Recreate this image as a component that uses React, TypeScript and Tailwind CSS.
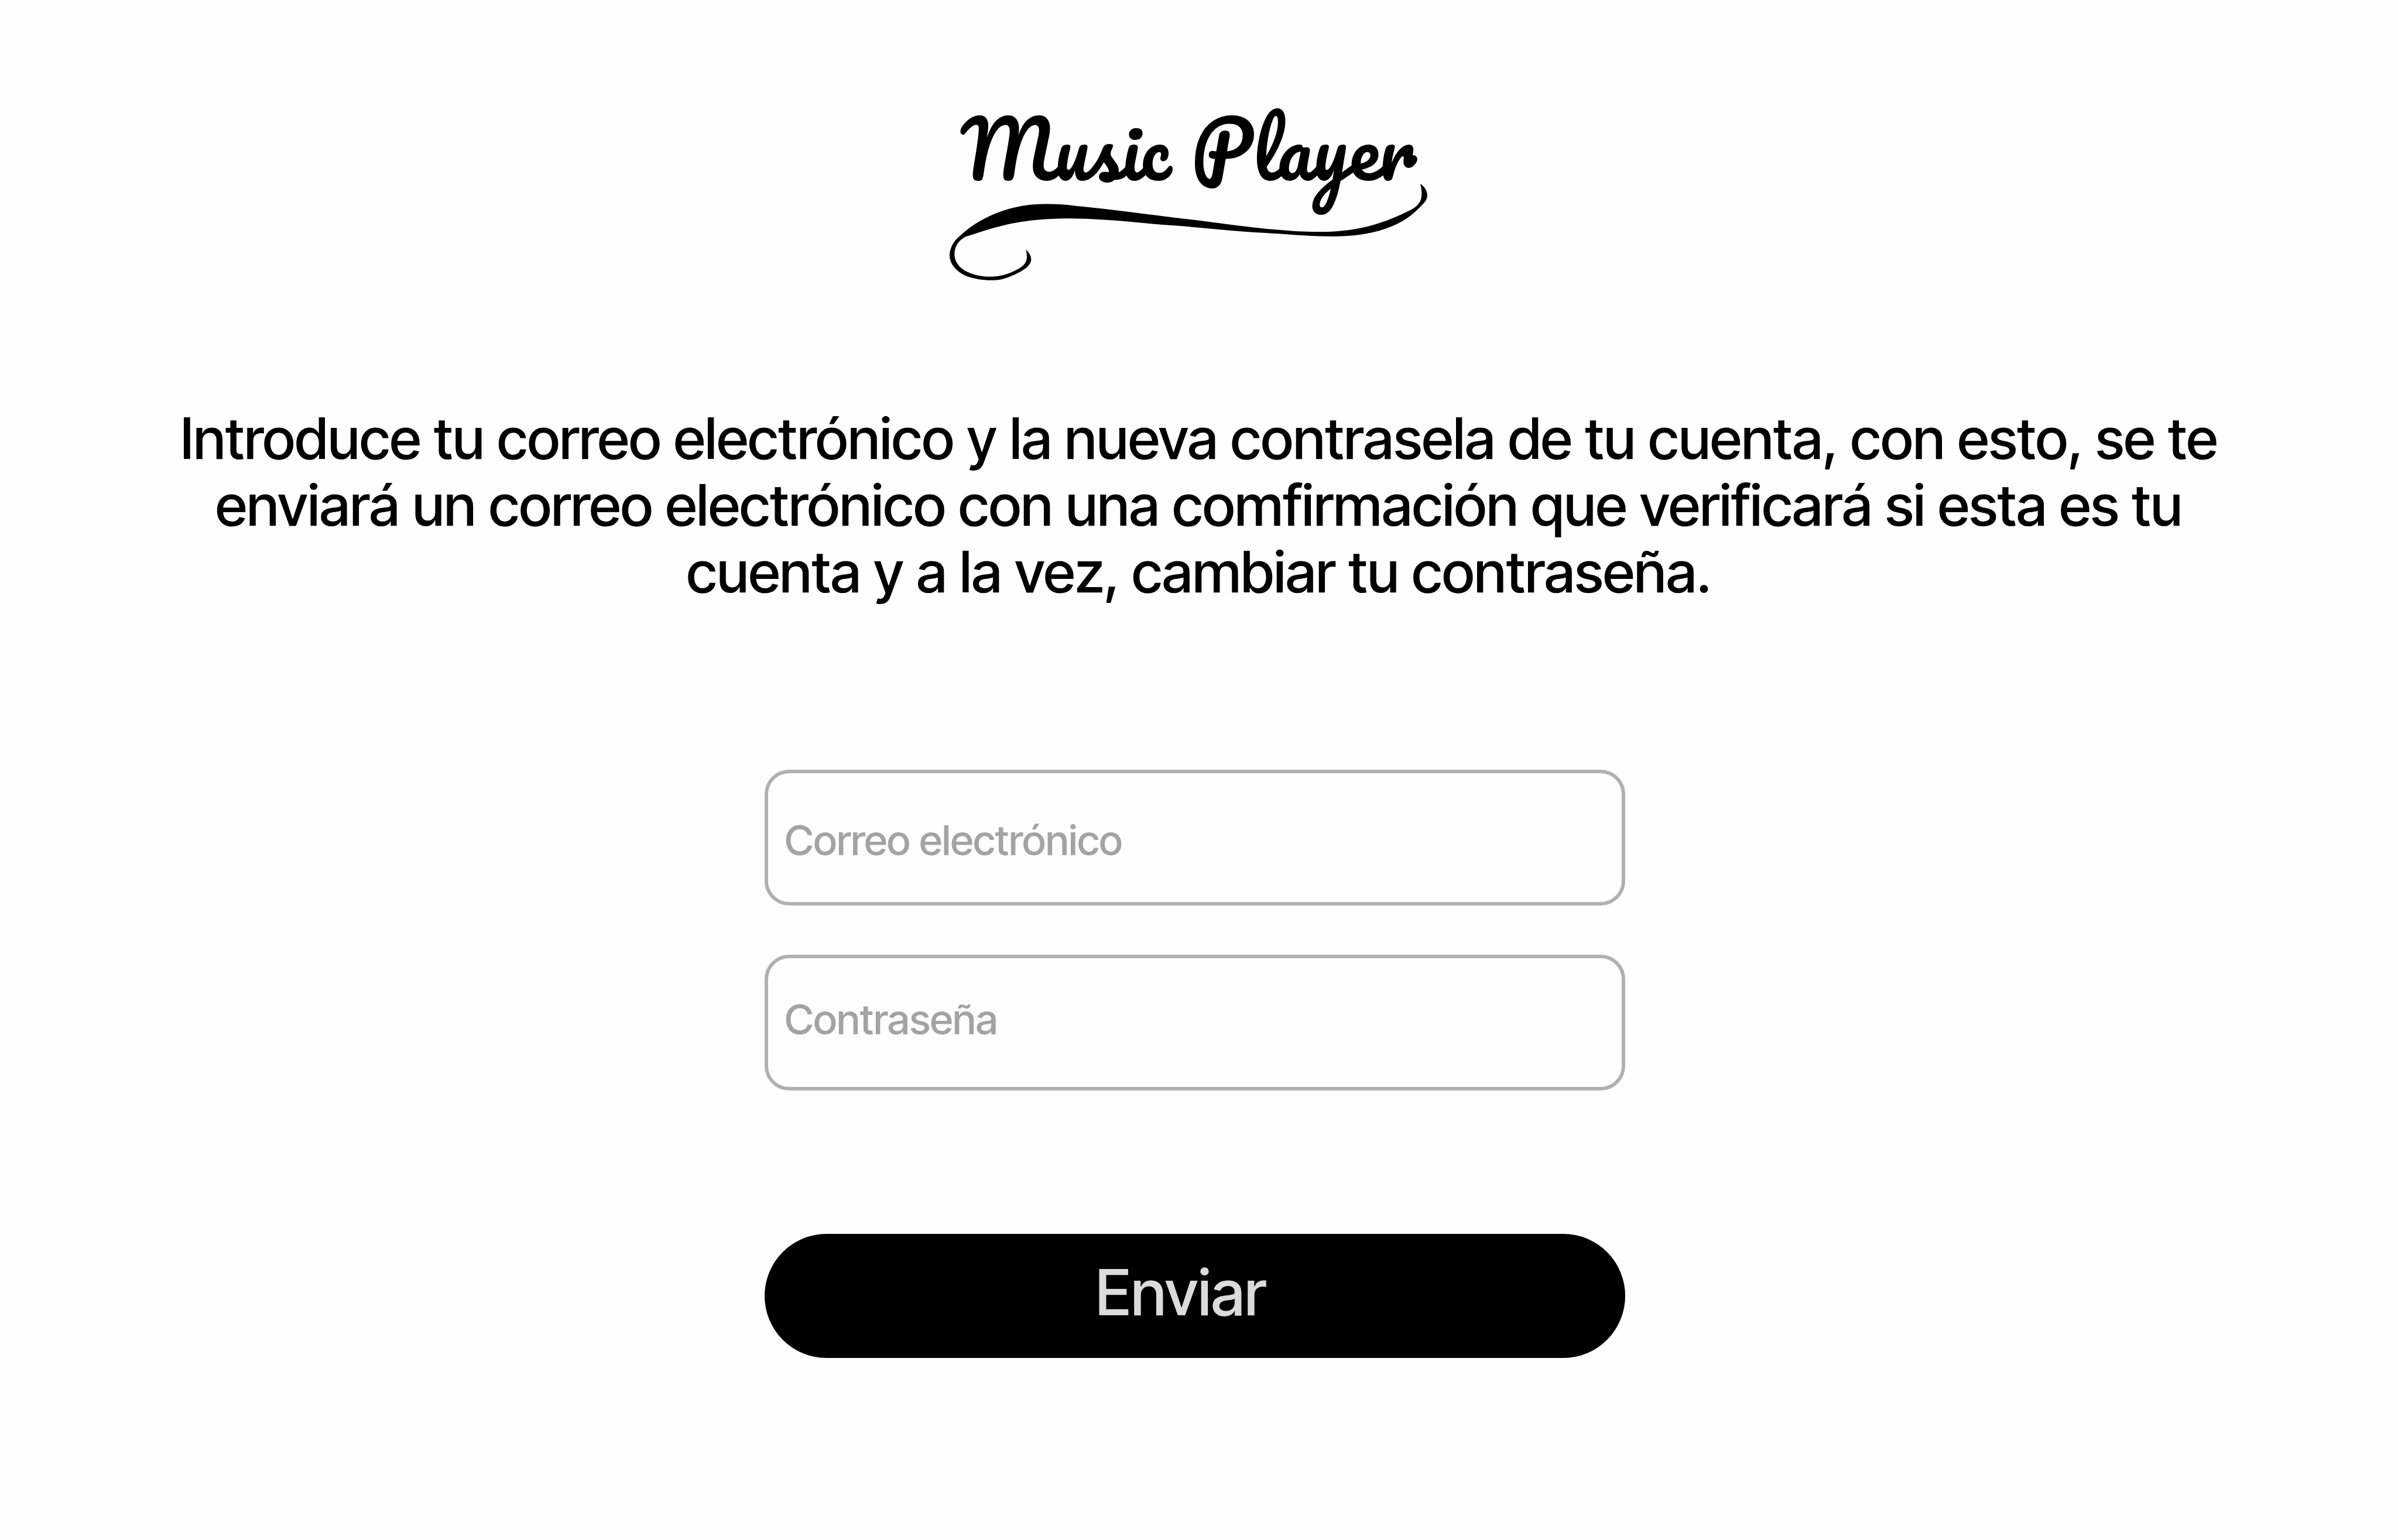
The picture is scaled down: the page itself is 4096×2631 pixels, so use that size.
import { useState } from 'react';

function Logo() {
  return (
    <h1 className="flex flex-col items-center">
      <span className="whitespace-nowrap font-['Pacifico','Lato',cursive] text-[130px] font-normal leading-[174px]">
        Music Player
      </span>
      <svg
        viewBox="36 63 3123 630"
        preserveAspectRatio="none"
        className="-mt-[26px] h-[165px] w-[816px]"
        aria-hidden="true"
      >
        <path
          fill="currentColor"
          d="M3113 63C3166 98 3171 155 3137 188C3085 245 3025 302 2925 341C2790 398 2640 409 2500 406C2370 404 2240 392 2090 383C1930 374 1745 356 1560 339C1330 326 1080 290 830 289C500 289 350 338 140 409C90 435 68 475 68 525C70 575 100 612 150 637C225 674 320 676 390 658C440 643 475 625 500 609C540 580 549 555 535 492C582 540 577 575 540 609C500 640 440 670 375 686C310 698 215 692 140 662C80 635 36 585 36 530C36 485 60 440 95 410C180 332 270 278 385 239C530 190 690 185 860 207C1090 229 1330 262 1560 290C1760 312 1980 348 2180 363C2330 378 2450 379 2560 373C2760 358 2890 310 3020 248C3110 208 3139 170 3113 63Z"
        />
      </svg>
    </h1>
  );
}

export default function App() {
  const [email, setEmail] = useState('');
  const [password, setPassword] = useState('');

  return (
    <main className="flex min-h-screen flex-col items-center bg-[#fefefe] font-['Inter_Tight','Inter',sans-serif] font-medium text-black">
      <header className="flex w-full justify-center pr-9 pt-[166px]">
        <Logo />
      </header>

      <p className="mt-[213px] w-full px-72 text-center text-[98px] leading-[114px]">
        Introduce tu correo electrónico y la nueva contrasela de tu cuenta, con esto, se te enviará un
        correo electrónico con una comfirmación que verificará si esta es tu cuenta y a la vez, cambiar
        tu contraseña.
      </p>

      <form
        className="mt-[281px] flex w-full flex-col items-center pr-3.5"
        onSubmit={(event) => event.preventDefault()}
      >
        <div className="flex w-9/25 flex-col gap-[84px]">
          <input
            type="email"
            aria-label="Correo electrónico"
            placeholder="Correo electrónico"
            value={email}
            onChange={(event) => setEmail(event.target.value)}
            className="h-[232px] w-full rounded-[42px] border-[6px] border-[#b0b0b0] bg-transparent px-7 pt-2 text-[71px] placeholder:text-[#a3a3a3]"
          />
          <input
            type="password"
            aria-label="Contraseña"
            placeholder="Contraseña"
            value={password}
            onChange={(event) => setPassword(event.target.value)}
            className="h-[232px] w-full rounded-[42px] border-[6px] border-[#b0b0b0] bg-transparent px-7 pb-3 text-[71px] placeholder:text-[#a3a3a3]"
          />
        </div>
        <button
          type="submit"
          className="mt-[245px] h-[212px] w-9/25 rounded-full bg-black pb-3 pr-12 text-[108px] text-[#dbdbdb]"
        >
          Enviar
        </button>
      </form>
    </main>
  );
}
